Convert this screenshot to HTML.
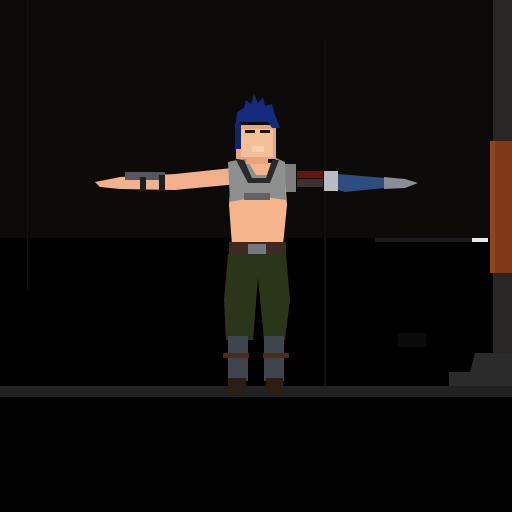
<!DOCTYPE html>
<html><head><style>
html,body{margin:0;padding:0;background:#000;width:512px;height:512px;overflow:hidden}
</style></head><body>
<svg width="512" height="512" viewBox="0 0 512 512" xmlns="http://www.w3.org/2000/svg">
<rect width="512" height="512" fill="#000"/>
<rect width="512" height="238" fill="#0d0b0a"/>
<rect x="27" y="0" width="1" height="290" fill="#121010"/>
<rect x="324" y="40" width="2" height="370" fill="#121110"/>
<rect x="0" y="386" width="512" height="11" fill="#222121"/>
<rect x="0" y="397" width="512" height="115" fill="#020202"/>
<rect x="375" y="238" width="100" height="4" fill="#1a1a1c"/>
<rect x="472" y="238" width="16" height="4" fill="#e8e8e8"/>
<rect x="493" y="0" width="19" height="386" fill="#292625"/>
<rect x="490" y="141" width="22" height="132" fill="#7f3916"/>
<rect x="490" y="141" width="5" height="132" fill="#93441c"/>
<polygon points="470,372 475,353 512,353 512,386 449,386 449,372" fill="#2c2b2b"/>
<rect x="398" y="333" width="28" height="14" fill="#0a0a0a"/>
<polygon points="95,182 120,177 175,174 232,168 238,184 175,190 120,189 100,187" fill="#f2b08c"/>
<rect x="125" y="172" width="40" height="8" fill="#55575c"/>
<rect x="140" y="177" width="6" height="14" fill="#1e1e1e"/>
<rect x="159" y="175" width="6" height="16" fill="#1e1e1e"/>
<rect x="284" y="164" width="12" height="28" fill="#7c8080"/>
<rect x="297" y="171" width="26" height="7" fill="#6a1212"/>
<rect x="297" y="179" width="26" height="8" fill="#3a3430"/>
<rect x="324" y="171" width="14" height="20" fill="#b8bcc4"/>
<polygon points="338,174 385,178 384,188 345,192 338,190" fill="#2d4d80"/>
<polygon points="384,177 405,179 418,183 405,188 384,189" fill="#8a8d95"/>
<polygon points="232,165 284,162 287,205 283,245 232,245 229,205" fill="#f6b48c"/>
<polygon points="228,162 246,158 256,175 268,175 276,158 285,162 286,200 272,198 250,198 230,202" fill="#8e9090"/>
<polygon points="236,160 244,160 252,178 266,178 272,160 279,160 270,183 248,183" fill="#2a2a2a"/>
<rect x="244" y="193" width="26" height="7" fill="#606365"/>
<rect x="246" y="150" width="22" height="14" fill="#e9a17e"/>
<rect x="236" y="125" width="40" height="34" fill="#e6a483"/>
<rect x="241" y="129" width="32" height="28" fill="#f4c09c"/>
<rect x="252" y="146" width="12" height="6" fill="#ffd0b0"/>
<polygon points="235,132 237,112 244,108 246,100 251,104 254,94 258,103 263,97 265,106 272,104 274,112 280,128 272,128 268,122 240,122" fill="#142a7c"/>
<rect x="235" y="124" width="6" height="25" fill="#14246a"/>
<rect x="245" y="130" width="10" height="3" fill="#1a1410"/>
<rect x="260" y="130" width="10" height="3" fill="#1a1410"/>
<rect x="229" y="242" width="57" height="12" fill="#3d2a22"/>
<rect x="248" y="244" width="18" height="10" fill="#757a80"/>
<polygon points="228,254 286,254 290,300 285,340 264,340 258,278 253,340 226,340 224,300" fill="#2a3519"/>
<rect x="228" y="336" width="20" height="45" fill="#41444b"/>
<rect x="264" y="336" width="20" height="45" fill="#41444b"/>
<rect x="223" y="353" width="26" height="5" fill="#4a2b22"/>
<rect x="263" y="353" width="26" height="5" fill="#4a2b22"/>
<rect x="228" y="378" width="18" height="18" fill="#2a1f16"/>
<rect x="266" y="378" width="17" height="18" fill="#2a1f16"/>
</svg>
</body></html>
